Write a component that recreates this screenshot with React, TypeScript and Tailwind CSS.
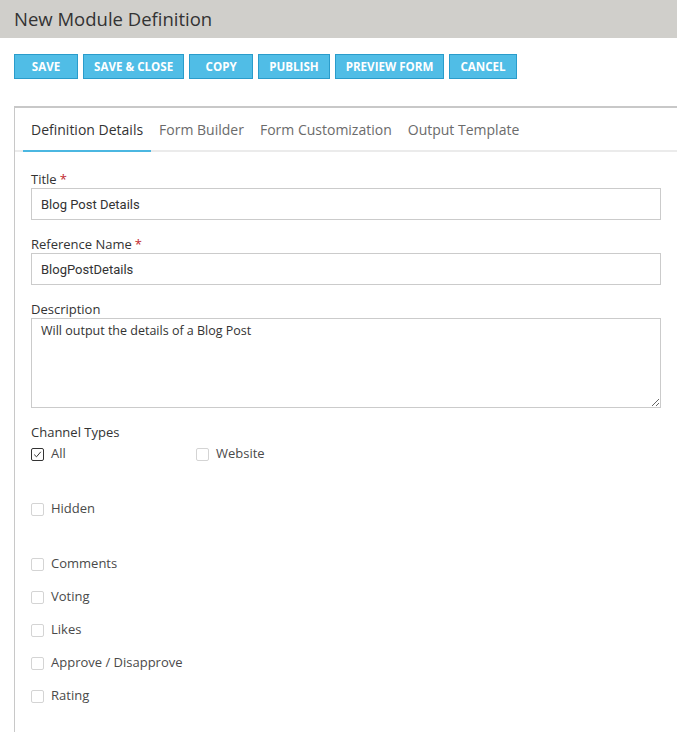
import React from "react";

const buttons = ["SAVE", "SAVE & CLOSE", "COPY", "PUBLISH", "PREVIEW FORM", "CANCEL"];
const tabs = ["Definition Details", "Form Builder", "Form Customization", "Output Template"];

function Check({ checked, label }: { checked?: boolean; label: string }) {
  return (
    <label className="flex items-center gap-[7px] h-[18px] text-[13px] text-[#4a4a4a]">
      <span
        className={
          "w-[13px] h-[13px] rounded-[2px] border flex items-center justify-center bg-white " +
          (checked ? "border-[#333]" : "border-[#d4d4d4]")
        }
      >
        {checked && (
          <svg width="9" height="9" viewBox="0 0 9 9" fill="none">
            <path d="M1.2 4.6 L3.5 6.8 L7.8 1.8" stroke="#333" strokeWidth="1" />
          </svg>
        )}
      </span>
      <span>{label}</span>
    </label>
  );
}

export default function App() {
  return (
    <div className="w-[677px] min-h-[732px] bg-white font-['Open_Sans',sans-serif] text-[#333]">
      <div className="h-[38px] bg-[#d0cfcb] flex items-center pl-[14px]">
        <h1 className="text-[18.5px] text-[#333] leading-none">New Module Definition</h1>
      </div>

      <div className="flex gap-[5px] pl-[14px] mt-[16px]">
        {buttons.map((b) => (
          <button
            key={b}
            className="h-[25px] px-[10px] min-w-[64px] bg-[#50bde6] border border-[#2a9ccb] text-white text-[11.6px] font-bold leading-none"
          >
            {b}
          </button>
        ))}
      </div>

      <div className="ml-[14px] mt-[27px] border-t-2 border-l border-[#c8c8c8]">
        <div className="flex px-[8px] border-b-2 border-[#ebebeb] h-[44px]">
          {tabs.map((t, i) => (
            <div
              key={t}
              className={
                "px-[8px] flex items-center text-[14px] -mb-[2px] border-b-2 " +
                (i === 0 ? "border-[#4bb7e1] text-[#333]" : "border-transparent text-[#6b6b6b]")
              }
            >
              {t}
            </div>
          ))}
        </div>

        <div className="pl-[16px] pr-[16px] pt-[18px] pb-[27px]">
          <div className="text-[13px] h-[18px] leading-[18px]">
            Title<span className="text-[#c1272d] ml-[3px]">*</span>
          </div>
          <input
            defaultValue="Blog Post Details"
            className="block w-full h-[32px] border border-[#cbcbcb] px-[9px] text-[13px] text-[#333] font-['Roboto',sans-serif] outline-none"
          />

          <div className="text-[13px] h-[18px] leading-[18px] mt-[15px]">
            Reference Name<span className="text-[#c1272d] ml-[3px]">*</span>
          </div>
          <input
            defaultValue="BlogPostDetails"
            className="block w-full h-[32px] border border-[#cbcbcb] px-[9px] text-[13px] text-[#333] font-['Roboto',sans-serif] outline-none"
          />

          <div className="text-[13px] h-[18px] leading-[18px] mt-[15px]">Description</div>
          <textarea
            defaultValue="Will output the details of a Blog Post"
            className="block w-full h-[90px] border border-[#cbcbcb] px-[9px] py-[3px] text-[12.5px] text-[#333] outline-none resize"
          />

          <div className="text-[13px] h-[18px] leading-[18px] mt-[15px]">Channel Types</div>
          <div className="flex flex-col mt-[4px]">
            <div className="flex h-[18px]">
              <div className="w-[165px]">
                <Check checked label="All" />
              </div>
              <Check label="Website" />
            </div>
            <div className="mt-[37px]">
              <Check label="Hidden" />
            </div>
            <div className="mt-[37px] flex flex-col gap-[15px]">
              <Check label="Comments" />
              <Check label="Voting" />
              <Check label="Likes" />
              <Check label="Approve / Disapprove" />
              <Check label="Rating" />
            </div>
          </div>
        </div>
      </div>
    </div>
  );
}
